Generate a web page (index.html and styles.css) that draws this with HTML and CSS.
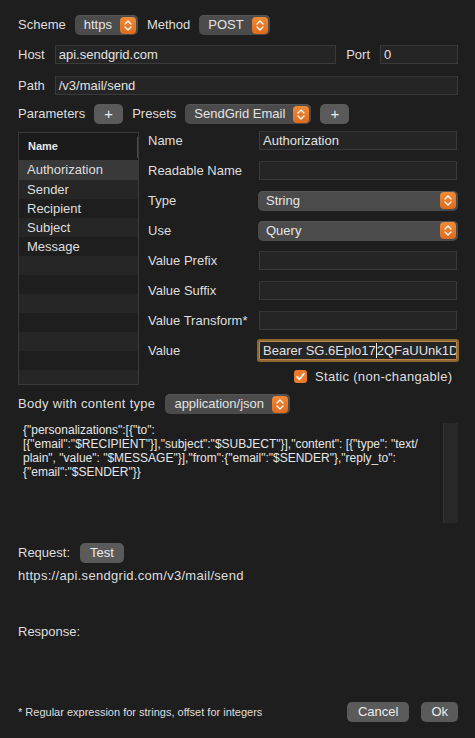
FILE: index.html
```html
<!DOCTYPE html>
<html lang="en">
<head>
    <meta charset="UTF-8">
    <title>Edit Request</title>
    <link rel="stylesheet" href="styles.css">
</head>
<body>
<div class="dialog">
    <div class="row row-scheme">
        <span>Scheme</span>
        <div class="popup"><span>https</span><span class="stepper"><svg viewBox="0 0 16 17"><path d="M5 7l3-3 3 3M5 10l3 3 3-3"/></svg></span></div>
        <span>Method</span>
        <div class="popup"><span>POST</span><span class="stepper"><svg viewBox="0 0 16 17"><path d="M5 7l3-3 3 3M5 10l3 3 3-3"/></svg></span></div>
    </div>

    <div class="row row-host">
        <span>Host</span>
        <div class="field grow">api.sendgrid.com</div>
        <span>Port</span>
        <div class="field port">0</div>
    </div>

    <div class="row row-path">
        <span>Path</span>
        <div class="field grow">/v3/mail/send</div>
    </div>

    <div class="row row-params">
        <span>Parameters</span>
        <div class="btn plus">+</div>
        <span>Presets</span>
        <div class="popup"><span>SendGrid Email</span><span class="stepper"><svg viewBox="0 0 16 17"><path d="M5 7l3-3 3 3M5 10l3 3 3-3"/></svg></span></div>
        <div class="btn plus">+</div>
    </div>

    <div class="editor">
        <div class="params-table">
            <div class="th">Name</div>
            <div class="tr selected">Authorization</div>
            <div class="tr alt">Sender</div>
            <div class="tr">Recipient</div>
            <div class="tr alt">Subject</div>
            <div class="tr">Message</div>
            <div class="tr alt"></div>
            <div class="tr"></div>
            <div class="tr alt"></div>
            <div class="tr"></div>
            <div class="tr alt"></div>
            <div class="tr"></div>
            <div class="tr alt"></div>
        </div>

        <div class="param-detail">
            <div class="form">
                <span>Name</span>
                <div class="field">Authorization</div>
                <span>Readable Name</span>
                <div class="field"></div>
                <span>Type</span>
                <div class="popup wide"><span>String</span><span class="stepper"><svg viewBox="0 0 16 17"><path d="M5 7l3-3 3 3M5 10l3 3 3-3"/></svg></span></div>
                <span>Use</span>
                <div class="popup wide"><span>Query</span><span class="stepper"><svg viewBox="0 0 16 17"><path d="M5 7l3-3 3 3M5 10l3 3 3-3"/></svg></span></div>
                <span>Value Prefix</span>
                <div class="field"></div>
                <span>Value Suffix</span>
                <div class="field"></div>
                <span>Value Transform*</span>
                <div class="field"></div>
                <span>Value</span>
                <div class="field focused">Bearer SG.6Eplo17<span class="caret"></span>2QFaUUnk1D</div>
            </div>
            <div class="check-row">
                <span class="checkbox"><svg viewBox="0 0 13 13"><path d="M3.2 6.8l2.3 2.5 4.4-5.6"/></svg></span>
                <span class="wide-text">Static (non-changable)</span>
            </div>
        </div>
    </div>

    <div class="row row-body">
        <span class="wide-text">Body with content type</span>
        <div class="popup"><span>application/json</span><span class="stepper"><svg viewBox="0 0 16 17"><path d="M5 7l3-3 3 3M5 10l3 3 3-3"/></svg></span></div>
    </div>

    <div class="body-text">
        <div class="json">{"personalizations":[{"to":<br>[{"email":"$RECIPIENT"}],"subject":"$SUBJECT"}],"content": [{"type": "text/<br>plain", "value": "$MESSAGE"}],"from":{"email":"$SENDER"},"reply_to":<br>{"email":"$SENDER"}}</div>
        <div class="scroller"></div>
    </div>

    <div class="row row-request">
        <span>Request:</span>
        <div class="btn">Test</div>
    </div>
    <div class="url wide-text">https://api.sendgrid.com/v3/mail/send</div>
    <div class="response">Response:</div>

    <div class="footer">
        <span class="note">* Regular expression for strings, offset for integers</span>
        <div class="btn cancel">Cancel</div>
        <div class="btn">Ok</div>
    </div>
</div>
</body>
</html>
```

FILE: styles.css
```css
/* dark macOS-ish sheet */
html, body { margin: 0; background: #1e1e1e; }
body { color: #dedede; font: 13px/16px "Liberation Sans", Arial, sans-serif; }
.dialog { height: 738px; box-sizing: border-box; padding: 15px 17px 16px 18px; display: flex; flex-direction: column; }
.wide-text { letter-spacing: 0.3px; }

.row { display: flex; align-items: center; gap: 9px; }
.row-scheme { height: 20px; }
.row-host { margin-top: 10px; gap: 10px; }
.row-path { margin-top: 12px; gap: 10px; }
.row-params { margin-top: 9px; height: 20px; }
.row-body { margin-top: 8px; height: 20px; gap: 10px; }
.row-request { margin-top: 20px; height: 20px; gap: 10px; }

.field { height: 19px; box-sizing: border-box; background: #252525; border: 1px solid #3a3a3a; border-top-color: #353535; padding: 0 0 0 3px; line-height: 17px; white-space: nowrap; overflow: hidden; color: #e2e2e2; }
.grow { flex: 1; }
.port { width: 78px; }
.field.focused { border-color: #b5864a; box-shadow: 0 0 0 2px #8e6630; border-radius: 1px; }
.caret { display: inline-block; width: 1px; height: 15px; background: #f0f0f0; vertical-align: -3px; }

.popup { display: inline-flex; align-items: center; gap: 8px; height: 20px; box-sizing: border-box; padding: 0 2px 0 9px; background: #4b4b4b; border-radius: 5px; color: #e4e4e4; box-shadow: inset 0 1px 0 #555; }
.popup.wide { width: 200px; margin-left: -1px; justify-content: space-between; padding-left: 8px; }
.stepper { width: 16px; height: 17px; border-radius: 4px; background: linear-gradient(#f08a36, #dd6c1f); display: flex; }
.stepper svg { width: 16px; height: 17px; fill: none; stroke: #fff; stroke-width: 1.3; stroke-linecap: round; stroke-linejoin: round; }

.btn { height: 20px; box-sizing: border-box; padding: 0 10px; border-radius: 5px; background: #5a5a5a; color: #ececec; line-height: 20px; text-align: center; }
.plus { width: 29px; padding: 0; font-size: 15px; }
.cancel { padding: 0 11px; }

.editor { display: flex; margin-top: 8px; }
.params-table { width: 121px; height: 253px; box-sizing: border-box; border: 1px solid #3a3a3a; background: #1e1e1e; overflow: hidden; }
.th { height: 27px; line-height: 27px; padding-left: 9px; font-size: 11px; font-weight: bold; background: #1b1b1b; position: relative; color: #e8e8e8; }
.th::after { content: ""; position: absolute; right: 0; top: 4px; bottom: 2px; width: 1px; background: #4a4a4a; }
.tr { height: 19px; line-height: 19px; padding-left: 8px; }
.tr.alt { background: #262626; }
.tr.selected { height: 20px; line-height: 20px; background: #393939; }

.param-detail { margin-left: 9px; }
.form { margin-top: -1px; display: grid; grid-template-columns: 111px 198px; grid-auto-rows: 19px; row-gap: 11px; align-items: center; }
.check-row { display: flex; align-items: center; gap: 8px; margin: 7px 0 0 146px; height: 19px; }
.checkbox { width: 13px; height: 13px; border-radius: 3px; background: #ea7a2c; display: flex; }
.checkbox svg { width: 13px; height: 13px; fill: none; stroke: #fff; stroke-width: 1.8; stroke-linecap: round; stroke-linejoin: round; }

.body-text { margin-top: 9px; height: 100px; display: flex; }
.json { flex: 1; padding-left: 5px; font-size: 12px; line-height: 14px; color: #e6e6e6; }
.scroller { width: 14px; background: #282828; border-left: 1px solid #333; }

.url { margin-top: 5px; }
.response { margin-top: 40px; }

.footer { margin-top: auto; display: flex; align-items: center; gap: 12px; }
.note { font-size: 11px; flex: 1; }
```
